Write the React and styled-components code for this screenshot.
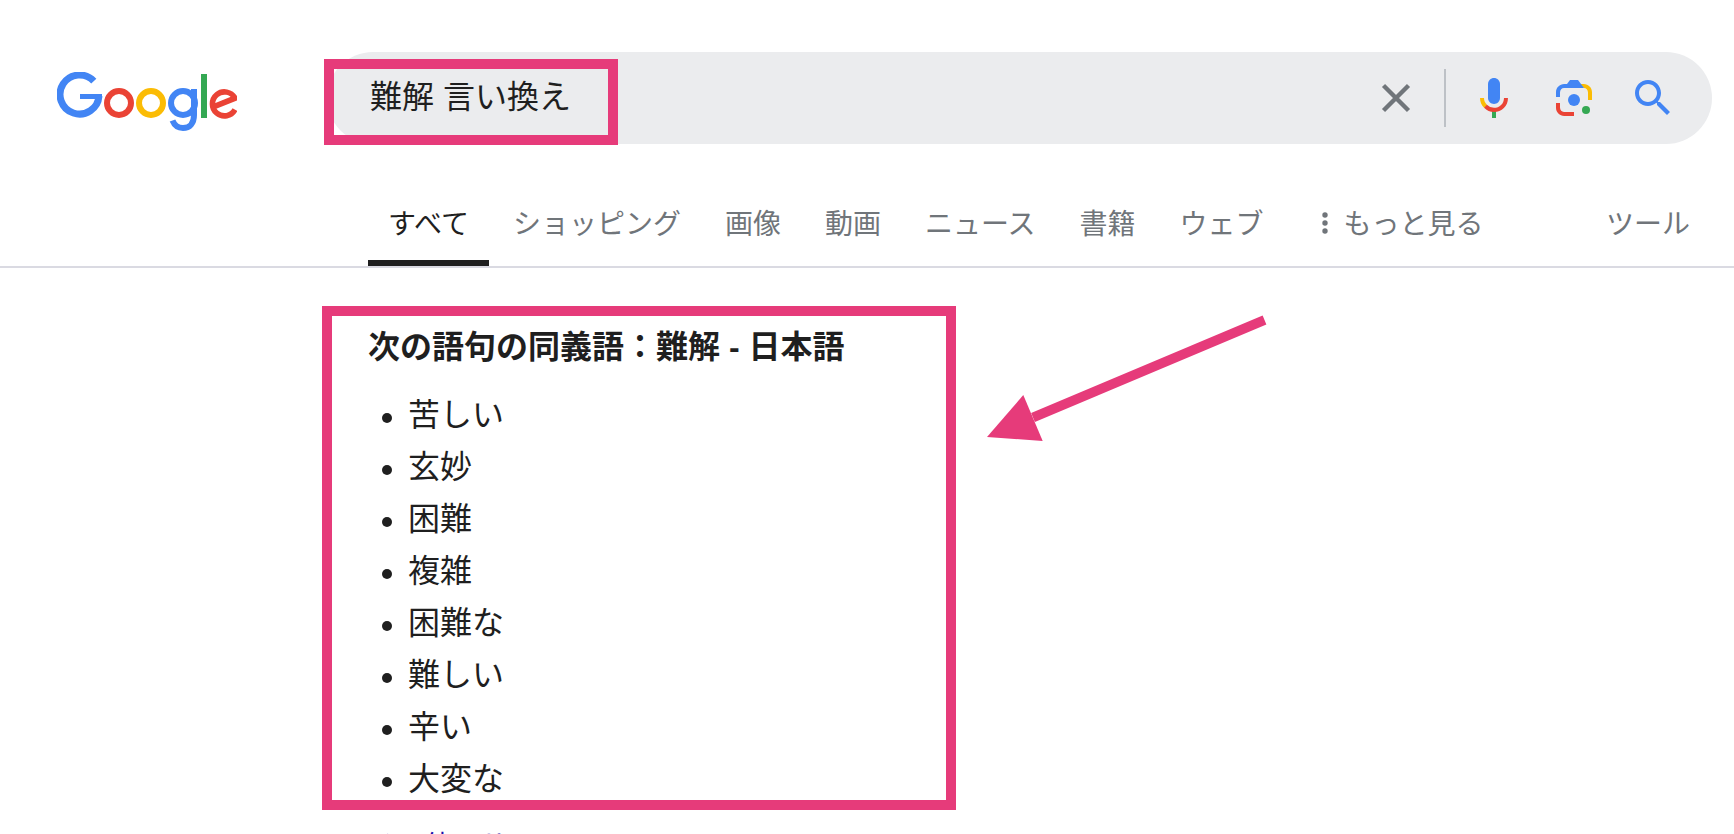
import React, { useState } from 'react'
import styled, { createGlobalStyle } from 'styled-components'

const pink = '#e63b7a'

const GlobalStyle = createGlobalStyle`
* {
  box-sizing: border-box;
}
html {
  scrollbar-width: none;
}
body {
  margin: 0;
  background-color: #fff;
  color: #1f1f1f;
  font-family: "Liberation Sans", "Noto Sans CJK JP", sans-serif;
  overflow-x: hidden;
}
`

const Header = styled.header`
display: flex;
align-items: center;
padding: 52px 22px 0 57px;
`

const LogoLink = styled.a`
display: block;
width: 180px;
height: 60px;
margin: 8px 90px 0 0;

svg {
  display: block;
}
`

const SearchForm = styled.form`
position: relative;
flex: 1;
min-width: 0;
height: 92px;
display: flex;
align-items: center;
padding: 0 35px 0 43px;
border-radius: 46px;
background-color: #ebecee;
`

const SearchInput = styled.input`
flex: 1;
min-width: 0;
height: 56px;
padding: 0 0 8px;
border: none;
outline: none;
background: none;
color: #1f1f1f;
font-family: inherit;
font-size: 32px;
`

const IconButton = styled.button`
width: 48px;
height: 48px;
padding: 0;
margin-left: ${(props) => props.$gap || 0}px;
border: none;
background: none;
cursor: pointer;

svg {
  display: block;
}
`

const Divider = styled.span`
width: 2px;
height: 58px;
margin-left: 24px;
background-color: #bdc1c6;
`

const QueryMark = styled.span`
position: absolute;
left: -3px;
top: 7px;
width: 294px;
height: 86px;
border: 10px solid ${pink};
pointer-events: none;
`

const Nav = styled.nav`
display: flex;
gap: 4px;
margin-top: 36px;
padding: 0 24px 0 368px;
border-bottom: 2px solid #dadae2;
`

const Tab = styled.a`
padding: 4px 20px 0;
color: ${(props) => (props.$active ? '#1f1f1f' : '#70757a')};
box-shadow: ${(props) => (props.$active ? 'inset 0 -6px #1f1f1f' : 'none')};
font-size: 28px;
line-height: 82px;
text-decoration: none;
white-space: nowrap;
`

const TabButton = styled.button`
display: flex;
align-items: center;
padding: 4px 20px 0;
margin-left: ${(props) => (props.$right ? 'auto' : '0')};
border: none;
background: none;
color: #70757a;
font-family: inherit;
font-size: 28px;
line-height: 82px;
white-space: nowrap;
cursor: pointer;

svg {
  margin-bottom: 4px;
}
`

const Main = styled.main`
padding: 38px 24px 0 322px;
`

const AnswerWrap = styled.div`
position: relative;
max-width: 634px;
`

const Answer = styled.section`
padding: 7px 36px 0;
border: 10px solid ${pink};
`

const Heading = styled.h2`
margin: 0 0 23px;
font-size: 32px;
font-weight: 700;
line-height: 48px;
`

const WordList = styled.ul`
display: flex;
flex-direction: column;
gap: 10px;
margin: 0;
padding: 0 0 0 14px;
list-style: none;
`

const Word = styled.li`
display: flex;
align-items: center;
gap: 16px;
font-size: 32px;
line-height: 42px;

&::before {
  content: "";
  width: 10px;
  height: 10px;
  margin-top: 6px;
  border-radius: 50%;
  background-color: #1f1f1f;
}
`

const Arrow = styled.svg`
position: absolute;
left: calc(100% + 31px);
top: 8px;
`

const MoreLink = styled.a`
display: block;
margin: 13px 0 0 46px;
color: #1a0dab;
font-size: 28px;
line-height: 48px;
text-decoration: none;
`

const tabs = ['すべて', 'ショッピング', '画像', '動画', 'ニュース', '書籍', 'ウェブ']

const words = ['苦しい', '玄妙', '困難', '複雑', '困難な', '難しい', '辛い', '大変な']

const Logo = () => (
  <svg width="180" height="60" viewBox="0 0 180 60" fill="none" aria-hidden="true">
    <path d="M36.8 9.2A19.5 19.5 0 1 0 42 24" stroke="#4285f4" strokeWidth="7" />
    <rect x="23" y="22" width="22" height="5" fill="#4285f4" />
    <circle cx="62" cy="31" r="12" stroke="#ea4335" strokeWidth="6" />
    <circle cx="94" cy="31" r="12" stroke="#fbbc05" strokeWidth="6" />
    <circle cx="126" cy="31" r="12" stroke="#4285f4" strokeWidth="6" />
    <path d="M137 17V43C137 51.5 132.5 56 126 56C121 56 117.5 53.5 115.5 48.5" stroke="#4285f4" strokeWidth="6" />
    <rect x="144" y="2" width="6" height="44" fill="#34a853" />
    <path d="M178 37.6A12 12 0 1 1 178 26.2L157 34.6" stroke="#ea4335" strokeWidth="5.6" />
  </svg>
)

const ClearIcon = () => (
  <svg width="48" height="48" viewBox="0 0 48 48" aria-hidden="true">
    <path d="M11.5 11.5l25 25M36.5 11.5l-25 25" stroke="#70757a" strokeWidth="4.4" />
  </svg>
)

const MicIcon = () => (
  <svg width="48" height="48" viewBox="0 0 24 24" aria-hidden="true">
    <path fill="#4285f4" d="M12 15c1.66 0 3-1.31 3-2.97V5.01C15 3.35 13.66 2 12 2S9 3.34 9 5.01v7.02C9 13.69 10.34 15 12 15z" />
    <path fill="#34a853" d="M11 18.08h2V22h-2z" />
    <path fill="#fbbc04" d="M7.05 16.87C5.78 15.54 5 14.04 5 12h2c0 1.45.56 2.42 1.47 3.38v.32l-1.15 1.18z" />
    <path fill="#ea4335" d="M12 16.93a4.97 5.25 0 0 1-3.54-1.55l-1.41 1.49C8.31 18.21 10.07 19 12 19c3.87 0 6.99-2.92 6.99-7H17c0 2.92-2.24 4.93-5 4.93z" />
  </svg>
)

const LensIcon = () => (
  <svg width="48" height="48" viewBox="0 0 192 192" aria-hidden="true">
    <circle fill="#34a853" cx="144" cy="144" r="16" />
    <circle fill="#4285f4" cx="96" cy="104" r="24" />
    <path fill="#ea4335" d="M24 135.2c0 18.11 14.69 32.8 32.8 32.8H96v-16l-40.1-.1c-8.8 0-15.9-8.19-15.9-17.9v-18H24z" />
    <path fill="#fbbc04" d="M168 72.8c0-18.11-14.69-32.8-32.8-32.8H116l20 16c8.8 0 16 8.29 16 18v30h16z" />
    <path fill="#4285f4" d="M112 24H80L68 40H56.8C38.69 40 24 54.69 24 72.8V92h16V74c0-9.71 7.2-18 16-18h80z" />
  </svg>
)

const SearchIcon = () => (
  <svg width="48" height="48" viewBox="0 0 24 24" aria-hidden="true">
    <path fill="#4285f4" d="M15.5 14h-.79l-.28-.27C15.41 12.59 16 11.11 16 9.5 16 5.91 13.09 3 9.5 3S3 5.91 3 9.5 5.91 16 9.5 16c1.61 0 3.09-.59 4.23-1.57l.27.28v.79l5 4.99L20.49 19l-4.99-5zm-6 0C7.01 14 5 11.99 5 9.5S7.01 5 9.5 5 14 7.01 14 9.5 11.99 14 9.5 14z" />
  </svg>
)

const DotsIcon = () => (
  <svg width="36" height="24" viewBox="0 0 36 24" fill="#70757a" aria-hidden="true">
    <circle cx="17" cy="4" r="2.7" />
    <circle cx="17" cy="12" r="2.7" />
    <circle cx="17" cy="20" r="2.7" />
  </svg>
)

const App = () => {
  const [query, setQuery] = useState('難解 言い換え')

  return (
    <>
      <GlobalStyle />
      <Header>
        <LogoLink href="#" aria-label="Google">
          <Logo />
        </LogoLink>
        <SearchForm role="search" onSubmit={(e) => e.preventDefault()}>
          <SearchInput
            type="text"
            aria-label="検索"
            value={query}
            onChange={(e) => setQuery(e.target.value)}
          />
          <IconButton type="button" aria-label="クリア" onClick={() => setQuery('')}>
            <ClearIcon />
          </IconButton>
          <Divider />
          <IconButton type="button" aria-label="音声検索" $gap={24}>
            <MicIcon />
          </IconButton>
          <IconButton type="button" aria-label="画像で検索" $gap={32}>
            <LensIcon />
          </IconButton>
          <IconButton type="submit" aria-label="検索" $gap={31}>
            <SearchIcon />
          </IconButton>
          <QueryMark />
        </SearchForm>
      </Header>

      <Nav>
        {tabs.map((tab, i) => (
          <Tab key={tab} href="#" $active={i === 0}>{tab}</Tab>
        ))}
        <TabButton type="button">
          <DotsIcon />
          もっと見る
        </TabButton>
        <TabButton type="button" $right>ツール</TabButton>
      </Nav>

      <Main>
        <AnswerWrap>
          <Answer>
            <Heading>次の語句の同義語：難解 - 日本語</Heading>
            <WordList>
              {words.map((word) => (
                <Word key={word}>{word}</Word>
              ))}
            </WordList>
          </Answer>
          <Arrow width="280" height="130" viewBox="0 0 280 130" aria-hidden="true">
            <path d="M0 123L36.3 81L55.7 127z" fill={pink} />
            <path d="M46 103.5L277.5 6" stroke={pink} strokeWidth="9.6" />
          </Arrow>
        </AnswerWrap>
        <MoreLink href="#">その他のサイト</MoreLink>
      </Main>
    </>
  )
}

export default App
